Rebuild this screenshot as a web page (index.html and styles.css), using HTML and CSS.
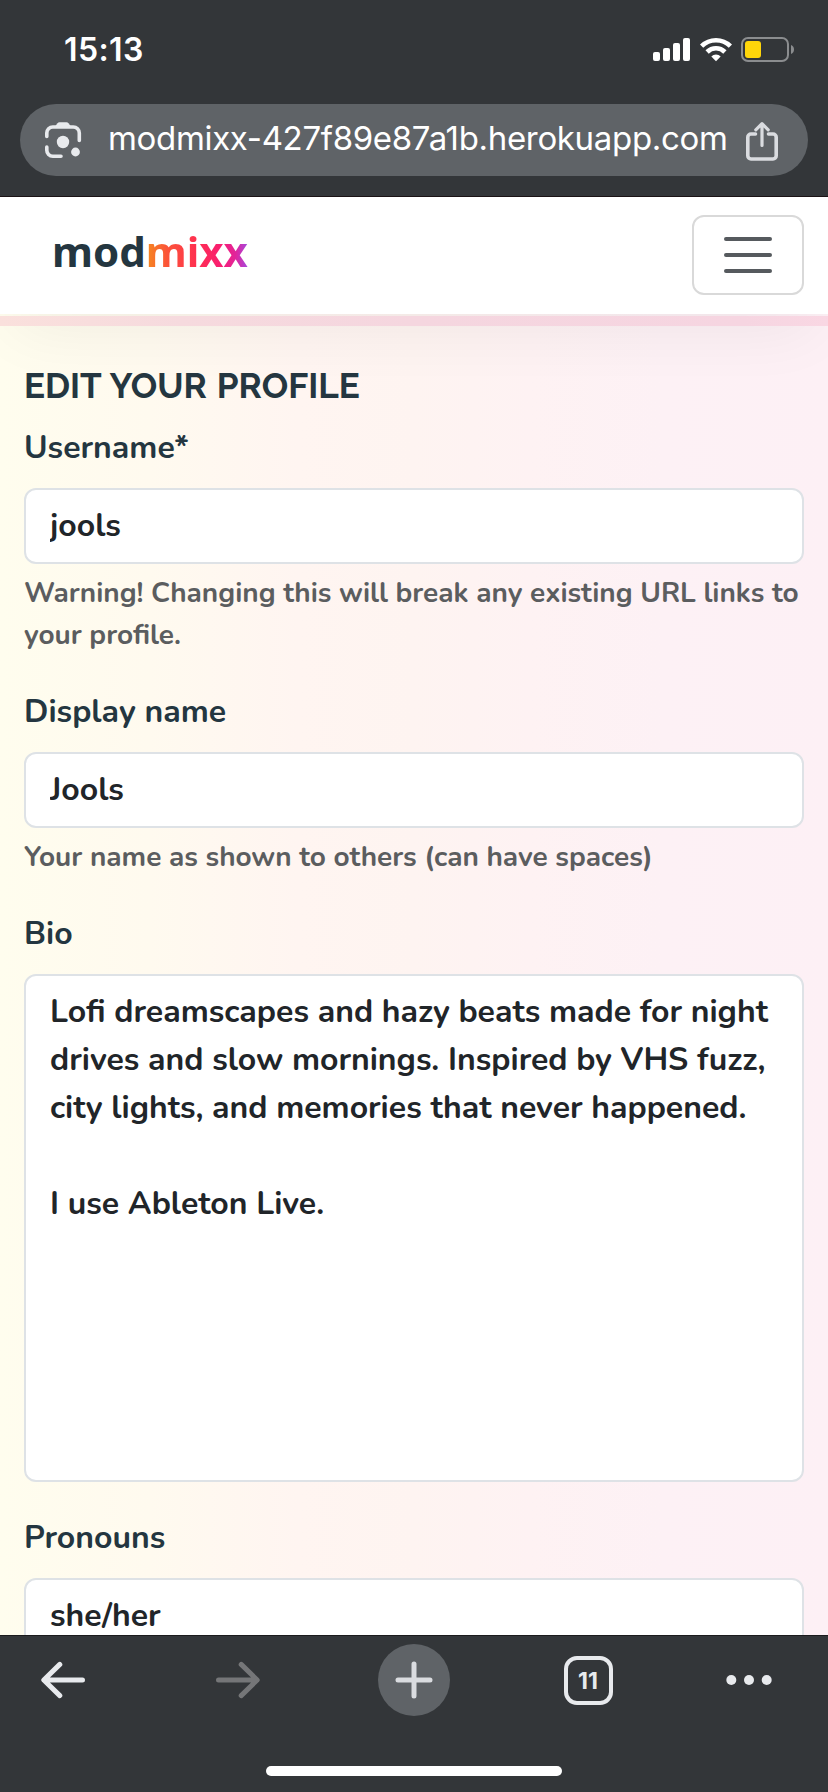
FILE: index.html
```html
<!DOCTYPE html>
<html lang="en">
<head>
<meta charset="utf-8">
<title>modmixx</title>
<link rel="stylesheet" href="styles.css">
</head>
<body>
<div class="phone">
  <header class="browser-top">
    <div class="status">
      <span class="clock">15:13</span>
      <div class="status-icons">
        <svg class="signal" width="37" height="23" viewBox="0 0 37 23" fill="#fff">
          <rect x="0" y="14" width="7" height="9" rx="2"/><rect x="10" y="10" width="7" height="13" rx="2"/>
          <rect x="20" y="5" width="7" height="18" rx="2"/><rect x="30" y="0" width="7" height="23" rx="2"/>
        </svg>
        <svg class="wifi" width="32" height="25" viewBox="0 0 32 25">
          <g fill="none" stroke="#fff" stroke-width="4.6">
            <path d="M1.6 9.2a20.5 20.5 0 0 1 28.8 0"/><path d="M7.1 15a12.6 12.6 0 0 1 17.8 0"/>
          </g>
          <path d="M16 24.2l-4.7-4.8a6.7 6.7 0 0 1 9.4 0z" fill="#fff"/>
        </svg>
        <svg class="battery" width="53" height="25" viewBox="0 0 53 25">
          <rect x="1" y="1" width="46" height="23" rx="6" fill="none" stroke="#8b8d8f" stroke-width="2"/>
          <rect x="4" y="4" width="16" height="17" rx="3" fill="#ffd60a"/>
          <path d="M50 8c4 1.5 4 7.500 0 9z" fill="#8b8d8f"/>
        </svg>
      </div>
    </div>
    <div class="address">
      <svg width="38" height="38" viewBox="0 0 38 38">
        <g fill="none" stroke="#e8eaed" stroke-width="3.6" stroke-linecap="round">
          <path d="M2.800 15.500V12a6 6 0 0 1 6-6h20.500a6 6 0 0 1 6 6v7.500" />
          <path d="M2.800 26v3.300a6 6 0 0 0 6 6H17"/>
        </g>
        <path d="M11 5.500l2.500-3.300q.8-1 2-1h7q1.200 0 2 1L27 5.500z" fill="#e8eaed"/>
        <circle cx="19" cy="21" r="6.200" fill="#e8eaed"/><circle cx="31.500" cy="31" r="4.400" fill="#e8eaed"/>
      </svg>
      <span class="url">modmixx-427f89e87a1b.herokuapp.com</span>
      <svg class="share" width="34" height="40" viewBox="0 0 34 40" fill="none" stroke="#dadce0" stroke-width="3.600" stroke-linecap="round" stroke-linejoin="round">
        <path d="M10.500 13H6a3.200 3.200 0 0 0-3.200 3.200v18.600A3.200 3.200 0 0 0 6 38h22a3.200 3.200 0 0 0 3.200-3.200V16.200A3.200 3.200 0 0 0 28 13h-4.500"/>
        <path d="M17 24.500V3.500M10.800 8.800L17 2.600l6.200 6.200" stroke-width="3.200"/>
      </svg>
    </div>
  </header>

  <main class="page">
    <nav class="navbar">
      <a class="brand">mod<span class="brand-mix">mixx</span></a>
      <button class="toggler" aria-label="Menu">
        <i class="line"></i><i class="line"></i><i class="line"></i>
      </button>
    </nav>
    <div class="strip"></div>
    <form class="profile">
      <h1 class="title">EDIT YOUR PROFILE</h1>
      <div class="field">
        <label class="label">Username*</label>
        <input class="control single" value="jools">
        <p class="help">Warning! Changing this will break any existing URL links to your profile.</p>
      </div>
      <div class="field">
        <label class="label">Display name</label>
        <input class="control single" value="Jools">
        <p class="help">Your name as shown to others (can have spaces)</p>
      </div>
      <div class="field">
        <label class="label">Bio</label>
        <textarea class="control bio">Lofi dreamscapes and hazy beats made for night drives and slow mornings. Inspired by VHS fuzz, city lights, and memories that never happened.

I use Ableton Live.</textarea>
      </div>
      <div class="field">
        <label class="label">Pronouns</label>
        <input class="control single" value="she/her">
      </div>
    </form>
  </main>

  <footer class="browser-bottom">
    <div class="tools">
      <svg width="46" height="38" viewBox="0 0 46 38" fill="none" stroke="#e8eaed" stroke-width="5" stroke-linecap="round" stroke-linejoin="round"><path d="M42.500 19H4M19.800 3.400L3.800 19l16 15.600"/></svg>
      <svg width="46" height="38" viewBox="0 0 46 38" fill="none" stroke="#757678" stroke-width="5" stroke-linecap="round" stroke-linejoin="round"><path d="M3.500 19H42M26.200 3.400l16 15.600-16 15.600"/></svg>
      <span class="new-tab"><svg width="38" height="38" viewBox="0 0 38 38" stroke="#dadce0" stroke-width="5" stroke-linecap="round"><path d="M3 19h32M19 3v32"/></svg></span>
      <span class="tabs">11</span>
      <svg width="46" height="12" viewBox="0 0 46 12" fill="#e8eaed"><circle cx="5.300" cy="6" r="5"/><circle cx="23" cy="6" r="5"/><circle cx="40.700" cy="6" r="5"/></svg>
    </div>
    <div class="home"></div>
  </footer>
</div>
</body>
</html>
```

FILE: styles.css
```css
* { box-sizing: border-box; }
body { margin: 0; }
.phone {
  width: 828px; height: 1792px; overflow: hidden;
  display: flex; flex-direction: column;
  font-family: Nunito, Lato, "Open Sans", sans-serif;
}

/* browser chrome, top */
.browser-top { flex: none; height: 197px; background: #333639; border-bottom: 1px solid #1b1315; }
.status { height: 104px; padding: 0 34px 4px 64px; display: flex; align-items: center; justify-content: space-between; }
.clock { font: 600 32px/40px Inter, sans-serif; letter-spacing: .4px; color: #fff; }
.status-icons { display: flex; align-items: center; margin-top: -1px; }
.wifi { margin: 0 9px 0 10px; }
.address { height: 72px; margin: 0 20px; padding: 0 29px 0 24px; border-radius: 36px; background: #5f6367; display: flex; align-items: center; }
.url { flex: 1; margin: -4px 0 0 26px; font: 400 33px/40px Inter, sans-serif; letter-spacing: -.33px; color: #fff; white-space: nowrap; }
.share { margin-top: 2px; }

/* page */
.page { flex: 1; min-height: 0; overflow: hidden; background: linear-gradient(90deg, #fffdee 0%, #fffaef 18%, #fff5f1 36%, #fef4f1 50%, #fef2f3 64%, #fdf1f5 80%, #fdf0f5 100%); }
.navbar {
  height: 117px; margin-bottom: 2px; padding: 0 24px 0 52px; background: #fff;
  display: flex; align-items: center; justify-content: space-between;
  box-shadow: 0 30px 64px -14px rgba(0, 0, 0, .06);
}
.brand { font: 700 42px/60px "Noto Sans", sans-serif; letter-spacing: 0; color: #243640; margin-top: -9px; }
.brand-mix { background: linear-gradient(90deg, #f58a1f 0%, #fb5538 20%, #ff2f50 50%, #f81d75 75%, #e0259c 88%, #a34be0 100%); -webkit-background-clip: text; background-clip: text; color: transparent; }
.toggler { width: 112px; height: 80px; margin-top: -1px; padding: 0; border: 2px solid #d9d9d9; border-radius: 12px; background: #fff; display: flex; flex-direction: column; align-items: center; justify-content: center; gap: 12px; }
.line { width: 48px; height: 4px; border-radius: 2px; background: #565a5e; }
.strip { position: relative; height: 10px; background: linear-gradient(90deg, #fae0dc 0%, #f6dade 22%, #f5d6df 50%, #f6d5e1 90%, #f9d7e3 100%); }

/* profile form */
.profile { position: relative; padding: 38px 24px 0; }
.title { margin: 0 0 16px; font: 700 35px/44px Raleway, Lato, sans-serif; color: #243640; letter-spacing: 0; word-spacing: 1.5px; }
.field { margin-bottom: 32px; }
.label { display: block; margin-bottom: 16px; font-weight: 700; font-size: 32px; line-height: 48px; color: #243640; }
.control {
  display: block; width: 780px; padding: 12px 24px; border: 2px solid #dee2e6; border-radius: 12px; background: #fff;
  font-family: inherit; font-weight: 700; font-size: 32px; line-height: 48px; color: #212529;
  resize: none; overflow: hidden;
}
.single { height: 76px; padding: 11px 24px 13px; }
.bio { height: 508px; }
.help { margin: 8px 0 0; font-weight: 700; font-size: 28px; line-height: 42px; color: #5b5d5f; }

/* browser chrome, bottom */
.browser-bottom { flex: none; height: 157px; background: #333639; border-top: 1px solid #1b1b1d; }
.tools { height: 88px; display: grid; grid-template-columns: 126px 224px 128px 220px 102px; align-items: center; justify-items: center; }
.new-tab { width: 72px; height: 72px; border-radius: 50%; background: #5f6367; display: flex; align-items: center; justify-content: center; }
.tabs { width: 49px; height: 49px; border: 4.5px solid #e8eaed; border-radius: 13px; color: #e8eaed; font: 700 23px/42px Inter, sans-serif; text-align: center; }
.home { width: 296px; height: 10px; margin: 42px auto 0; border-radius: 5px; background: #fff; }
```
